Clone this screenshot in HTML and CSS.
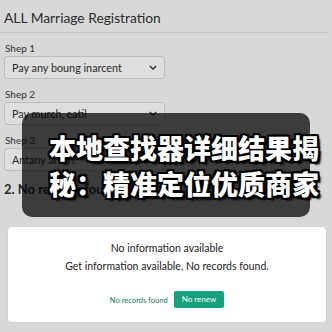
FILE: index.html
```html
<!DOCTYPE html>
<html>
<head>
<meta charset="utf-8">
<link rel="stylesheet" href="styles.css">
</head>
<body>
<div class="page">
  <h1 class="title">ALL Marriage Registration</h1>
  <div class="rule"></div>
  <div class="field">
    <div class="label">Shep 1</div>
    <div class="select"><span>Pay any boung inarcent</span><svg class="chev" viewBox="0 0 10 6" width="8" height="5"><path d="M1 1l4 4 4-4" fill="none" stroke="#333" stroke-width="1.7"/></svg></div>
  </div>
  <div class="field">
    <div class="label">Shep 2</div>
    <div class="select"><span>Pay murch, eatil</span><svg class="chev" viewBox="0 0 10 6" width="8" height="5"><path d="M1 1l4 4 4-4" fill="none" stroke="#333" stroke-width="1.7"/></svg></div>
  </div>
  <div class="field">
    <div class="label">Shep 3</div>
    <div class="select"><span>Antany arfurt</span><svg class="chev" viewBox="0 0 10 6" width="8" height="5"><path d="M1 1l4 4 4-4" fill="none" stroke="#333" stroke-width="1.7"/></svg></div>
  </div>
  <h2 class="sub">2. No records found</h2>
  <div class="card">
    <p class="msg">No information available</p>
    <p class="msg second">Get information available, No records found.</p>
    <div class="actions">
      <span class="link">No records found</span>
      <span class="btn">No renew</span>
    </div>
  </div>
</div>
<div class="overlay"></div>
<div class="caption">本地查找器详细结果揭<br>秘：精准定位优质商家</div>
</body>
</html>
```
FILE: styles.css
```css
html, body {
  margin: 0;
  padding: 0;
}
body {
  width: 332px;
  height: 332px;
  overflow: hidden;
  background: #d8d8d8;
  font-family: Lato, "Open Sans", sans-serif;
  color: #2a2a2a;
  position: relative;
}
.page {
  padding: 8px 4px 0 4px;
}
.title {
  margin: 0;
  font-size: 13.8px;
  font-weight: 400;
  line-height: 20px;
  color: #2b2b2b;
}
.rule {
  height: 1px;
  background: #c6c6c6;
  margin: 4px 0 0 -4px;
  width: 328px;
}
.field {
  margin-top: 9px;
  width: 161px;
}
.field:first-of-type {
  margin-top: 10px;
}
.label {
  font-size: 10px;
  line-height: 12px;
  color: #333;
  margin-bottom: 2px;
  padding-left: 1px;
}
.select {
  height: 21px;
  border: 1px solid #bcbcbc;
  border-radius: 3px;
  background: #dedede;
  display: flex;
  align-items: center;
  justify-content: space-between;
  padding: 0 7px 0 7px;
  font-size: 10.8px;
  color: #2a2a2a;
}
.chev {
  display: block;
}
.sub {
  margin: 10px 0 0 0;
  font-size: 13px;
  line-height: 16px;
  font-weight: 700;
  color: #2a2a2a;
}
.card {
  margin: 30px 2px 0 4px;
  height: 95px;
  background: #fff;
  border-radius: 4px;
  box-shadow: 0 0 2px rgba(0,0,0,0.08);
  display: flex;
  flex-direction: column;
  align-items: center;
  box-sizing: border-box;
  padding-top: 14px;
}
.msg {
  margin: 0;
  font-size: 10.5px;
  line-height: 14px;
  color: #222;
}
.second {
  margin-top: 4px;
}
.actions {
  margin-top: 18px;
  display: flex;
  align-items: center;
  gap: 6px;
}
.link {
  font-size: 7.6px;
  color: #177a5c;
}
.btn {
  background: #15a07e;
  color: #fff;
  font-size: 8px;
  border-radius: 2px;
  padding: 0 8px;
  height: 17px;
  line-height: 16px;
}
.overlay {
  position: absolute;
  left: 22px;
  top: 113px;
  width: 288px;
  height: 104px;
  background: rgba(0,0,0,0.72);
  border-radius: 10px;
}
.caption {
  position: absolute;
  left: 49px;
  top: 130px;
  width: 290px;
  font-family: "Noto Sans CJK SC", sans-serif;
  font-weight: 900;
  font-size: 27px;
  line-height: 36px;
  color: #fff;
  white-space: nowrap;
  text-shadow:
    2px 0 0 #000, -2px 0 0 #000, 0 2px 0 #000, 0 -2px 0 #000,
    2px 2px 0 #000, -2px -2px 0 #000, 2px -2px 0 #000, -2px 2px 0 #000,
    3px 3px 2px #000;
}
```
